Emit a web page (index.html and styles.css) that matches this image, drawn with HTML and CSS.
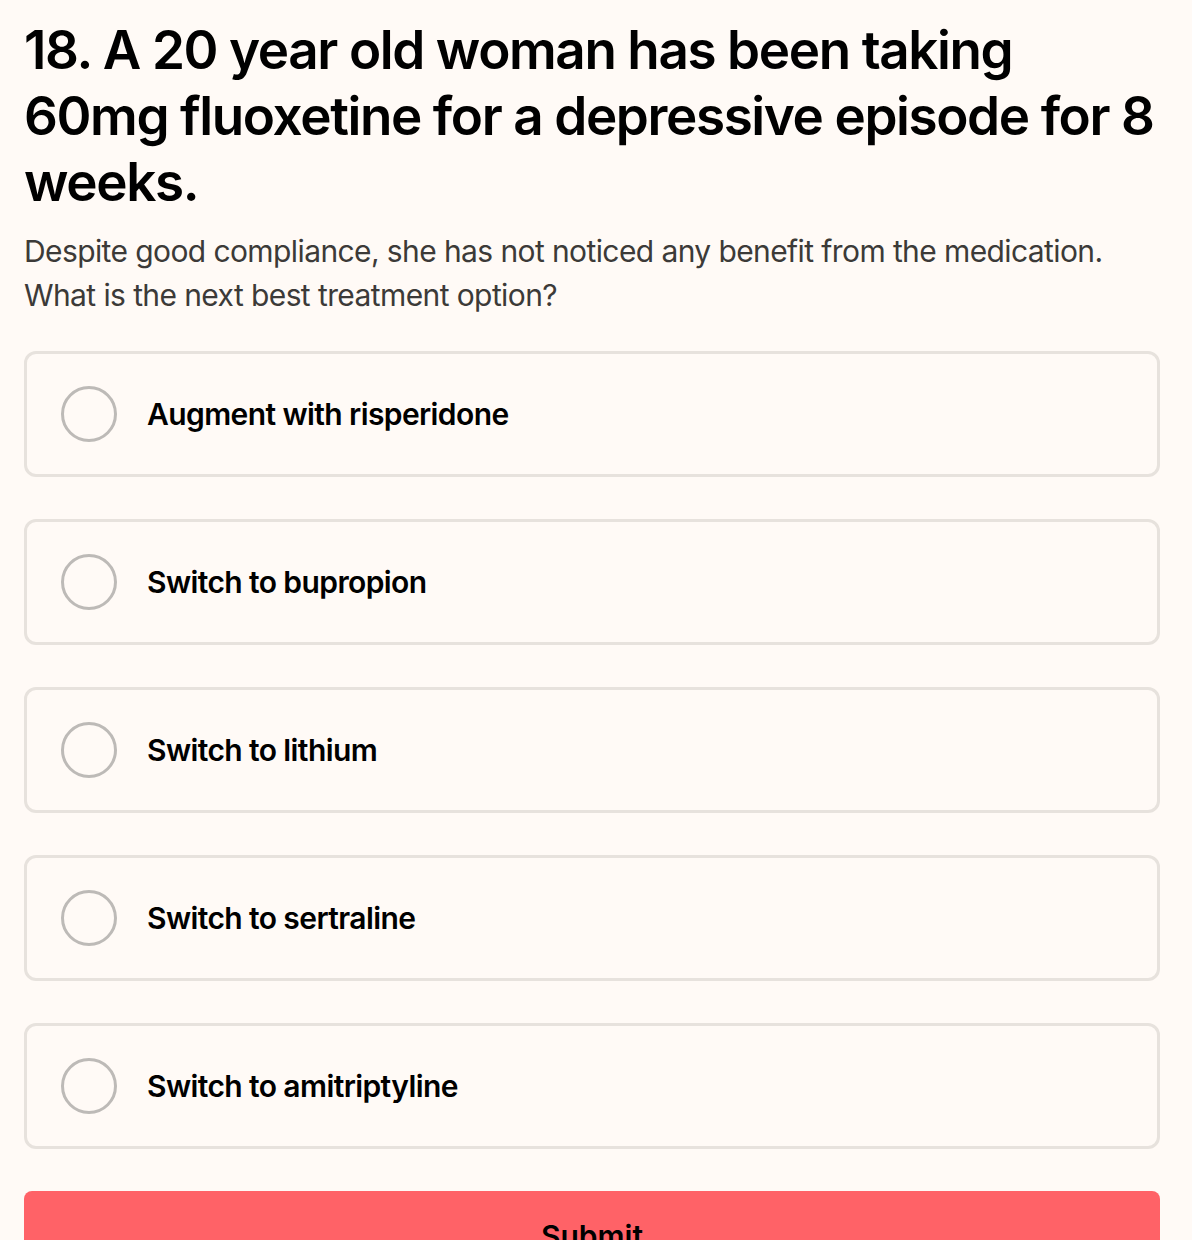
FILE: index.html
```html
<!DOCTYPE html>
<html lang="en">
<head>
<meta charset="utf-8">
<title>Question 18</title>
<link rel="stylesheet" href="styles.css">
</head>
<body>
<main class="quiz">
  <h1 class="question">18. A 20 year old woman has been taking 60mg fluoxetine for a depressive episode for 8 weeks.</h1>
  <p class="prompt">Despite good compliance, she has not noticed any benefit from the medication. What is the next best treatment option?</p>
  <ul class="options">
    <li class="option"><span class="radio"></span><span class="label">Augment with risperidone</span></li>
    <li class="option"><span class="radio"></span><span class="label">Switch to bupropion</span></li>
    <li class="option"><span class="radio"></span><span class="label">Switch to lithium</span></li>
    <li class="option"><span class="radio"></span><span class="label">Switch to sertraline</span></li>
    <li class="option"><span class="radio"></span><span class="label">Switch to amitriptyline</span></li>
  </ul>
  <button class="submit" type="button">Submit</button>
</main>
</body>
</html>
```
FILE: styles.css
```css
html, body {
  margin: 0;
  padding: 0;
  background: #fffaf6;
}
body {
  font-family: Inter, "Noto Sans", "Liberation Sans", sans-serif;
  color: #000;
}
.quiz {
  padding: 17px 32px 0 24px;
}
.question {
  margin: 0;
  font-size: 53px;
  line-height: 66px;
  font-weight: 600;
  letter-spacing: -1.4px;
}
.prompt {
  margin: 14px 0 0;
  font-size: 30px;
  line-height: 44px;
  color: #3c3a38;
  letter-spacing: -0.6px;
}
.options {
  list-style: none;
  margin: 34px 0 0;
  padding: 0;
  display: flex;
  flex-direction: column;
  gap: 42px;
}
.option {
  display: flex;
  align-items: center;
  height: 126px;
  box-sizing: border-box;
  border: 3px solid #e7e2dd;
  border-radius: 12px;
  padding-left: 34px;
}
.radio {
  width: 56px;
  height: 56px;
  box-sizing: border-box;
  border: 3px solid #bdbab7;
  border-radius: 50%;
  flex: none;
}
.label {
  margin-left: 30px;
  font-size: 30px;
  font-weight: 600;
  letter-spacing: -0.6px;
}
.submit {
  display: block;
  width: 100%;
  margin-top: 42px;
  height: 120px;
  border: none;
  border-radius: 8px;
  background: #ff6267;
  color: #000;
  font-family: inherit;
  font-size: 30px;
  font-weight: 600;
  padding: 0 0 30px;
  text-align: center;
}
```
